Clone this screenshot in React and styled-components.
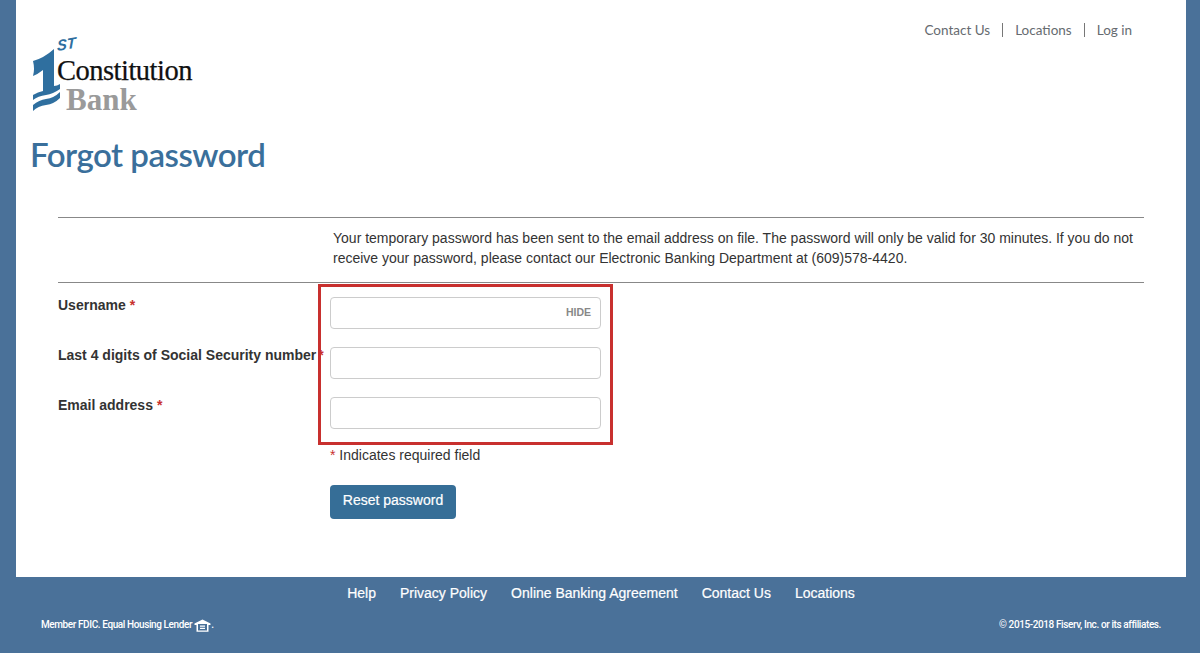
import styled, { createGlobalStyle } from "styled-components";

const GlobalStyle = createGlobalStyle`
  html, body {
    margin: 0;
    padding: 0;
    background: #4a7199;
    font-family: "Liberation Sans", Arial, sans-serif;
    color: #333;
  }
`;

const fields = [
  { id: "username", label: "Username", hide: true },
  { id: "ssn", label: "Last 4 digits of Social Security number" },
  { id: "email", label: "Email address" },
];

const footerLinks = ["Help", "Privacy Policy", "Online Banking Agreement", "Contact Us", "Locations"];

const LogoMark = () => (
  <MarkSvg viewBox="0 0 50 78" aria-hidden="true">
    <path
      d="M5 25 Q16 22 26 13 L26 50 Q29 50 32 48 L32 53 Q25 58 18 59 Q10 60 5 64 L5 59 Q10 56 15 55 L15 34 Q10 38 5 40 Q7 33 5 25 Z"
      fill="#2f6f9f"
    />
    <path d="M5 69 Q11 64 18 63 Q26 62 32 56 L32 62 Q26 68 18 69 Q10 70 5 75 Z" fill="#2f6f9f" />
  </MarkSvg>
);

const HouseIcon = () => (
  <HouseSvg viewBox="0 0 17 13" aria-hidden="true">
    <path d="M8.5 .5 L.5 4.6 V6 H2.5 V12.8 H14.5 V6 H16.5 V4.6 Z M4 5 H13 V11.6 H4 Z" fill="#fff" fillRule="evenodd" />
    <path d="M6 6.4 H11 V7.7 H6 Z M6 8.8 H11 V10.1 H6 Z" fill="#fff" />
  </HouseSvg>
);

export default function App() {
  return (
    <>
      <GlobalStyle />
      <Panel>
        <TopNav>
          <TopLink href="#">Contact Us</TopLink>
          <Divider />
          <TopLink href="#">Locations</TopLink>
          <Divider />
          <TopLink href="#">Log in</TopLink>
        </TopNav>

        <Logo>
          <LogoMark />
          <LogoWords>
            <LogoOrdinal>ST</LogoOrdinal>
            <LogoName>Constitution</LogoName>
            <LogoBank>Bank</LogoBank>
          </LogoWords>
        </Logo>

        <Title>Forgot password</Title>

        <FormArea>
          <Message>
            Your temporary password has been sent to the email address on file. The password will only be valid for 30
            minutes. If you do not receive your password, please contact our Electronic Banking Department at
            (609)578-4420.
          </Message>

          <Fields>
            <Highlight />
            {fields.map((field) => (
              <FieldRow key={field.id}>
                <Label htmlFor={field.id}>
                  {field.label}
                  <Star $tight={field.id === "ssn"}>*</Star>
                </Label>
                <InputWrap>
                  <Input id={field.id} type="text" />
                  {field.hide && <HideToggle>HIDE</HideToggle>}
                </InputWrap>
              </FieldRow>
            ))}
          </Fields>

          <Required>
            <RequiredStar>*</RequiredStar> Indicates required field
          </Required>
          <ResetButton type="button">Reset password</ResetButton>
        </FormArea>
      </Panel>

      <Footer>
        <FooterLinks>
          {footerLinks.map((link) => (
            <FooterLink key={link} href="#">
              {link}
            </FooterLink>
          ))}
        </FooterLinks>
        <FooterBottom>
          <SmallPrint>
            Member FDIC. Equal Housing Lender <HouseIcon />.
          </SmallPrint>
          <SmallPrint>© 2015-2018 Fiserv, Inc. or its affiliates.</SmallPrint>
        </FooterBottom>
      </Footer>
    </>
  );
}

const Panel = styled.main`
  box-sizing: border-box;
  height: 577px;
  margin: 0 14px 0 16px;
  background: #fff;
  padding: 21px 0 0;
`;

const TopNav = styled.nav`
  display: flex;
  justify-content: flex-end;
  align-items: center;
  height: 18px;
  padding-right: 54px;
  gap: 12px;
`;

const TopLink = styled.a`
  font-family: Lato, sans-serif;
  font-size: 13.5px;
  color: #666b70;
  text-decoration: none;
`;

const Divider = styled.span`
  width: 1px;
  height: 14px;
  background: #777;
`;

const Logo = styled.div`
  display: flex;
  align-items: flex-start;
  height: 78px;
  margin: -3px 0 0 12px;
`;

const MarkSvg = styled.svg`
  width: 50px;
  height: 78px;
  flex: none;
`;

const HouseSvg = styled.svg`
  width: 17px;
  height: 13px;
  vertical-align: -4px;
`;

const LogoWords = styled.div`
  display: flex;
  flex-direction: column;
  margin-left: -21px;
  font-family: "Liberation Serif", serif;
`;

const LogoOrdinal = styled.span`
  height: 19px;
  font: italic 700 15px/19px "Liberation Sans", sans-serif;
  color: #2f6f9f;
  transform: rotate(-10deg) skewX(-10deg);
  transform-origin: left bottom;
`;

const LogoName = styled.span`
  height: 30px;
  font-size: 28.5px;
  line-height: 31px;
  letter-spacing: -0.5px;
  color: #111;
  -webkit-text-stroke: 0.25px #111;
`;

const LogoBank = styled.span`
  margin-left: 9px;
  font-size: 31px;
  font-weight: 700;
  line-height: 30px;
  color: #9a9a9a;
`;

const Title = styled.h1`
  margin: 20px 0 0 14px;
  font-family: Lato, sans-serif;
  font-size: 33px;
  font-weight: 600;
  line-height: 40px;
  letter-spacing: -0.5px;
  color: #3a6f9b;
`;

const FormArea = styled.section`
  margin: 43px 42px 0;
`;

const Message = styled.p`
  margin: 0;
  padding: 10px 10px 14px 275px;
  border-top: 1px solid #888;
  border-bottom: 1px solid #888;
  font-size: 14px;
  line-height: 20px;
`;

const Fields = styled.div`
  position: relative;
  display: flex;
  flex-direction: column;
  gap: 18px;
  padding-top: 14px;
`;

const Highlight = styled.div`
  position: absolute;
  left: 260px;
  top: 1px;
  width: 289px;
  height: 155px;
  border: 3px solid #c8302e;
  pointer-events: none;
`;

const FieldRow = styled.div`
  display: flex;
  height: 32px;
`;

const Label = styled.label`
  width: 272px;
  flex: none;
  white-space: nowrap;
  font-size: 14px;
  font-weight: 700;
  line-height: 16px;
`;

const Star = styled.span`
  margin-left: ${(p) => (p.$tight ? "2px" : "4px")};
  color: #c8302e;
`;

const InputWrap = styled.div`
  position: relative;
  width: 271px;
`;

const Input = styled.input`
  box-sizing: border-box;
  width: 100%;
  height: 32px;
  border: 1px solid #ccc;
  border-radius: 4px;
  background: #fff;
`;

const HideToggle = styled.span`
  position: absolute;
  right: 10px;
  top: 9px;
  font-size: 10.5px;
  font-weight: 700;
  line-height: 13px;
  color: #888;
`;

const Required = styled.p`
  margin: 17px 0 0 272px;
  font-size: 14px;
  line-height: 18px;
`;

const RequiredStar = styled.span`
  color: #c8302e;
`;

const ResetButton = styled.button`
  display: block;
  width: 126px;
  height: 34px;
  margin: 21px 0 0 272px;
  padding: 0 0 4px;
  border: 0;
  border-radius: 4px;
  background: #366e97;
  color: #fff;
  font-family: "Liberation Sans", sans-serif;
  font-size: 14px;
  font-weight: 400;
  -webkit-text-stroke: 0.2px #fff;
`;

const Footer = styled.footer`
  box-sizing: border-box;
  height: 76px;
  padding-top: 7px;
  overflow: hidden;
  color: #fff;
`;

const FooterLinks = styled.nav`
  display: flex;
  justify-content: center;
  gap: 24px;
  padding-left: 2px;
`;

const FooterLink = styled.a`
  font-size: 14px;
  line-height: 18px;
  color: #fff;
  text-decoration: none;
  -webkit-text-stroke: 0.2px #fff;
`;

const FooterBottom = styled.div`
  display: flex;
  justify-content: space-between;
  align-items: center;
  margin-top: 15px;
  padding: 0 39px 0 41px;
`;

const SmallPrint = styled.span`
  font-family: Roboto, sans-serif;
  font-size: 10px;
  font-weight: 500;
  letter-spacing: -0.4px;
  line-height: 16px;
`;
